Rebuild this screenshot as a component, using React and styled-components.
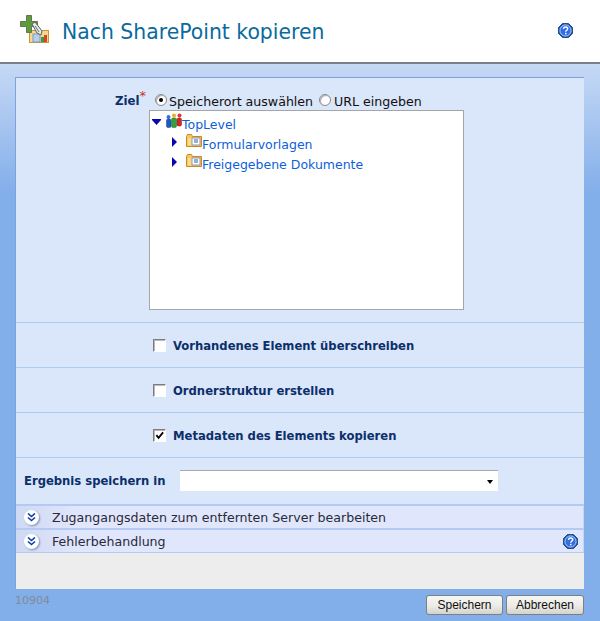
import React from 'react';
import styled, { createGlobalStyle } from 'styled-components';

const Global = createGlobalStyle`
  html, body { margin: 0; padding: 0; background: #fff; }
  body { font-family: "DejaVu Sans", Verdana, sans-serif; }
`;

const Page = styled.div`
  width: 600px;
  height: 621px;
  display: flex;
  flex-direction: column;
  overflow: hidden;
`;

const Header = styled.header`
  height: 64px;
  flex: none;
  box-sizing: border-box;
  display: flex;
  align-items: center;
  padding: 0 27px 0 19px;
  background: #fff;
  border-bottom: 2px solid #7b7f86;
`;

const HeaderIcon = styled.span`
  display: flex;
  margin-bottom: 4px;
`;

const HeaderHelp = styled.span`
  display: flex;
  margin-bottom: 2px;
`;

const Title = styled.h1`
  margin: 2px 0 0 12px;
  flex: 1;
  font-size: 20.4px;
  font-weight: normal;
  color: #0a6a9e;
`;

const Body = styled.main`
  flex: 1;
  display: flex;
  flex-direction: column;
  padding: 13px 16px 0 15px;
  background: linear-gradient(#c6d9f5 0, #82aeea 130px);
`;

const Panel = styled.section`
  height: 512px;
  flex: none;
  box-sizing: border-box;
  display: flex;
  flex-direction: column;
  background: #ededed;
  border-top: 1px solid #7ea3dc;
  border-left: 1px solid #7ea3dc;
`;

const Row = styled.div`
  height: ${p => p.$h}px;
  flex: none;
  box-sizing: border-box;
  background: #dae6f9;
  border-bottom: 1px solid #afcbf3;
  display: flex;
  align-items: center;
  padding-left: ${p => p.$pad || 137}px;
`;

const TargetRow = styled.div`
  height: 245px;
  flex: none;
  box-sizing: border-box;
  background: #dae6f9;
  border-bottom: 1px solid #afcbf3;
  display: grid;
  grid-template-columns: 130px 1fr;
  padding-top: 14px;
`;

const TargetLabel = styled.div`
  text-align: right;
  font-size: 11.7px;
  font-weight: bold;
  color: #0c2f6b;
  padding-top: 1px;
  line-height: 16px;
`;

const Star = styled.sup`
  color: #c8341a;
  font-weight: normal;
  font-size: 13px;
  line-height: 0;
`;

const Target = styled.div`
  padding-left: 8px;
`;

const RadioLine = styled.div`
  display: flex;
  align-items: center;
  height: 18px;
  font-size: 12.6px;
  color: #111;
`;

const Radio = styled.span`
  width: 10px;
  height: 10px;
  flex: none;
  margin: 0 ${p => p.$first ? 2 : 3}px 2px ${p => p.$first ? 1 : 6}px;
  border-radius: 50%;
  background: #fff;
  border: 1px solid #8a8a8a;
  box-shadow: inset 1px 1px 1px #aaa;
  display: flex;
  align-items: center;
  justify-content: center;
  &::after {
    content: '';
    display: ${p => p.$on ? 'block' : 'none'};
    width: 4px;
    height: 4px;
    border-radius: 50%;
    background: #000;
  }
`;

const TreeBox = styled.div`
  width: 315px;
  height: 200px;
  box-sizing: border-box;
  margin-left: -5px;
  background: #fff;
  border: 1px solid #a5a5a5;
  padding-top: 2px;
  padding-left: 1px;
`;

const TreeRow = styled.div`
  display: flex;
  align-items: flex-start;
  height: 20px;
  padding-left: ${p => p.$indent || 1}px;
`;

const TreeLink = styled.span`
  font-size: 12.5px;
  line-height: 20px;
  margin-top: 2px;
  color: #0e5fd8;
`;

const CheckLabel = styled.span`
  font-size: 11.6px;
  font-weight: bold;
  color: #0c2f6b;
  padding-top: 1px;
`;

const Box = styled.span`
  width: 11px;
  height: 11px;
  flex: none;
  margin-right: 7px;
  background: #fff;
  border: 1px solid;
  border-color: #7d7d7d #fff #fff #7d7d7d;
  box-shadow: inset 1px 1px 0 #b8b8b8;
  display: flex;
  align-items: center;
  justify-content: center;
`;

const ResultLabel = styled.span`
  width: 156px;
  flex: none;
  white-space: nowrap;
  font-size: 11.6px;
  font-weight: bold;
  color: #0c2f6b;
`;

const Select = styled.div`
  width: 318px;
  height: 21px;
  box-sizing: border-box;
  margin-bottom: 1px;
  background: #fff;
  border-top: 1px solid #a8a8b0;
  position: relative;
  &::after {
    content: '';
    position: absolute;
    right: 5px;
    top: 9px;
    border-style: solid;
    border-width: 4px 3.5px 0;
    border-color: #000 transparent transparent;
  }
`;

const Bar = styled.div`
  height: 24px;
  flex: none;
  box-sizing: border-box;
  display: flex;
  align-items: center;
  padding: 0 5px 0 8px;
  background: linear-gradient(90deg, #cfd9f3 0, #e0e6fb 60px);
  border-top: 1px solid #b5caf3;
  border-bottom: 1px solid #b5caf3;
  border-right: 1px solid #c5d6f5;
  font-size: 12.6px;
  color: #2a2a3a;
`;

const BarText = styled.span`
  flex: 1;
  margin-left: 13px;
`;

const Expand = styled.span`
  width: 15px;
  height: 15px;
  flex: none;
  border-radius: 50%;
  background: #fff;
  box-shadow: 1px 1px 2px #8090b8;
  display: flex;
  align-items: center;
  justify-content: center;
`;

const Footer = styled.footer`
  flex: 1;
  display: flex;
  align-items: flex-start;
  justify-content: space-between;
  padding-top: 6px;
`;

const Code = styled.span`
  font-size: 11px;
  line-height: 11px;
  color: #838a99;
`;

const Buttons = styled.div`
  display: flex;
  gap: 3px;
`;

const Button = styled.button`
  width: ${p => p.$w}px;
  height: 20px;
  padding: 0;
  font-family: "Liberation Sans", Arial, sans-serif;
  font-size: 12px;
  color: #111;
  background: linear-gradient(#f6f6f4 0, #ecebe6 55%, #d3d2cc 100%);
  border: 1px solid #7f7f7f;
  border-radius: 3px;
`;

const HelpIcon = () => (
  <svg width="15" height="15" viewBox="0 0 15 15">
    <path d="M4.500.5h6l4 4v6l-4 4h-6l-4-4v-6z" fill="#1d4fae" stroke="#1f4d8f" />
    <circle cx="7.500" cy="7.500" r="5.600" fill="#2f6fe0" stroke="#bcd4f5" strokeWidth="1" />
    <path d="M5.400 5.900c.2-1.300 1.100-1.900 2.200-1.900 1.300 0 2.100.8 2.100 1.800 0 1.500-2 1.500-2 3" fill="none" stroke="#fff" strokeWidth="1.400" />
    <rect x="7" y="9.800" width="1.500" height="1.500" fill="#fff" />
  </svg>
);

const CopyIcon = () => (
  <svg width="31" height="29" viewBox="0 0 31 29">
    <rect x="10.500" y="15.500" width="19" height="12" fill="#f8d58c" stroke="#c9953f" />
    <rect x="14" y="19" width="7" height="8" fill="#b7cfe8" stroke="#7c9cc0" />
    <rect x="25" y="20" width="3" height="7" fill="#d8402a" />
    <rect x="22" y="22" width="3" height="5" fill="#3c9a3f" />
    <path d="M7.500.5h5v6h6v5h-6v6h-5v-6h-6v-5h6z" fill="#5f9a3c" stroke="#5c7a4e" />
    <path d="M13 9l3-2 7 9-1 4-4-2z" fill="#f1ecc8" stroke="#56607a" />
    <path d="M16 11l4 6" stroke="#3a6fc0" strokeWidth="1" />
  </svg>
);

const GroupIcon = () => (
  <svg width="16" height="15" viewBox="0 0 16 15" style={{ flex: 'none' }}>
    <circle cx="2.500" cy="4" r="2" fill="#2f6fe0" />
    <rect x=".5" y="6" width="4.500" height="8.500" rx="1.500" fill="#1c5ac8" stroke="#123a80" strokeWidth=".5" />
    <circle cx="8" cy="2.500" r="2" fill="#e8b020" />
    <rect x="5.500" y="5" width="5" height="9.500" rx="1.500" fill="#35a03a" stroke="#1c6a22" strokeWidth=".5" />
    <circle cx="13.500" cy="2.500" r="2" fill="#d83a2a" />
    <rect x="11" y="5" width="4.500" height="8" rx="1.500" fill="#d02a20" stroke="#801a14" strokeWidth=".5" />
  </svg>
);

const FolderIcon = () => (
  <svg width="16" height="13" viewBox="0 0 16 13" style={{ flex: 'none', marginTop: 1 }}>
    <path d="M.5 2.500l1-2h4l1 2h9v10h-15z" fill="#f8c860" stroke="#c98a20" />
    <rect x="2" y="4" width="12.500" height="7.500" fill="#fbdc8c" />
    <rect x="6" y="4" width="8" height="7" fill="#fff" stroke="#6a86b0" strokeWidth=".8" />
    <path d="M8 6h4M8 8h4" stroke="#3060a8" strokeWidth="1" />
  </svg>
);

const ArrowDown = () => (
  <svg width="9" height="6" viewBox="0 0 9 6" style={{ flex: 'none', margin: '6px 5px 0 0' }}>
    <path d="M0 0h9v1L4.500 6 0 1z" fill="#0808b0" />
  </svg>
);

const ArrowRight = () => (
  <svg width="5" height="10" viewBox="0 0 5 10" style={{ flex: 'none', margin: '4px 9px 0 0' }}>
    <path d="M0 0l5 5-5 5z" fill="#0808b0" />
  </svg>
);

const Chevrons = () => (
  <svg width="9" height="9" viewBox="0 0 9 9">
    <path d="M1 .5l3.500 3 3.500-3M1 4.500l3.500 3 3.500-3" fill="none" stroke="#0c3fa8" strokeWidth="1.600" />
  </svg>
);

const Tick = () => (
  <svg width="9" height="9" viewBox="0 0 10 10">
    <path d="M1.500 4.500l2.500 3 5-6" fill="none" stroke="#000" strokeWidth="2" />
  </svg>
);

const options = [
  { label: 'Vorhandenes Element überschreiben' },
  { label: 'Ordnerstruktur erstellen' },
  { label: 'Metadaten des Elements kopieren', checked: true },
];

const folders = ['Formularvorlagen', 'Freigegebene Dokumente'];

export default function App() {
  return (
    <Page>
      <Global />
      <Header>
        <HeaderIcon><CopyIcon /></HeaderIcon>
        <Title>Nach SharePoint kopieren</Title>
        <HeaderHelp><HelpIcon /></HeaderHelp>
      </Header>
      <Body>
        <Panel>
          <TargetRow>
            <TargetLabel>Ziel<Star>*</Star></TargetLabel>
            <Target>
              <RadioLine>
                <Radio $on $first />Speicherort auswählen
                <Radio />URL eingeben
              </RadioLine>
              <TreeBox>
                <TreeRow>
                  <ArrowDown />
                  <GroupIcon />
                  <TreeLink>TopLevel</TreeLink>
                </TreeRow>
                {folders.map(f => (
                  <TreeRow $indent={21} key={f}>
                    <ArrowRight />
                    <FolderIcon />
                    <TreeLink>{f}</TreeLink>
                  </TreeRow>
                ))}
              </TreeBox>
            </Target>
          </TargetRow>
          {options.map(o => (
            <Row $h={45} key={o.label}>
              <Box>{o.checked && <Tick />}</Box>
              <CheckLabel>{o.label}</CheckLabel>
            </Row>
          ))}
          <Row $h={47} $pad={8}>
            <ResultLabel>Ergebnis speichern in</ResultLabel>
            <Select />
          </Row>
          <Bar>
            <Expand><Chevrons /></Expand>
            <BarText>Zugangangsdaten zum entfernten Server bearbeiten</BarText>
          </Bar>
          <Bar>
            <Expand><Chevrons /></Expand>
            <BarText>Fehlerbehandlung</BarText>
            <HelpIcon />
          </Bar>
        </Panel>
        <Footer>
          <Code>10904</Code>
          <Buttons>
            <Button $w={77}>Speichern</Button>
            <Button $w={78}>Abbrechen</Button>
          </Buttons>
        </Footer>
      </Body>
    </Page>
  );
}
